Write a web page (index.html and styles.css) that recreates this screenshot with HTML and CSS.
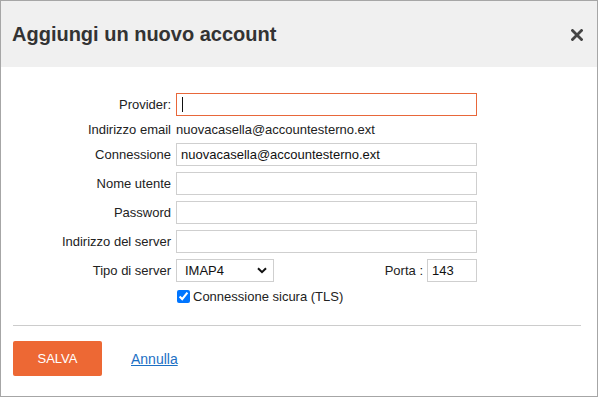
FILE: index.html
```html
<!DOCTYPE html>
<html lang="it">
<head>
    <meta charset="UTF-8">
    <meta name="viewport" content="width=device-width, initial-scale=1.0">
    <title>Aggiungi un nuovo account</title>
    <link rel="stylesheet" href="styles.css">
</head>
<body>
    <div class="dialog">
        <div class="dialog-header">
            <h1 class="dialog-title">Aggiungi un nuovo account</h1>
            <svg class="close" width="12" height="12" viewBox="0 0 12 12">
                <path d="M1.5 1.5 L10.5 10.5 M10.5 1.5 L1.5 10.5" stroke="#444" stroke-width="2.8" stroke-linecap="square"/>
            </svg>
        </div>

        <form class="account-form" action="">
            <label class="form-label" for="provider">Provider:</label>
            <div class="field field-focus">
                <span class="caret"></span>
            </div>

            <span class="form-label">Indirizzo email</span>
            <span class="form-value">nuovacasella@accountesterno.ext</span>

            <label class="form-label" for="conn">Connessione</label>
            <input class="field" type="text" id="conn" value="nuovacasella@accountesterno.ext">

            <label class="form-label" for="user">Nome utente</label>
            <input class="field" type="text" id="user">

            <label class="form-label" for="pass">Password</label>
            <input class="field" type="password" id="pass">

            <label class="form-label" for="server">Indirizzo del server</label>
            <input class="field" type="text" id="server">

            <label class="form-label" for="tipo">Tipo di server</label>
            <div class="server-row">
                <div class="select-wrap">
                    <select class="field select" id="tipo">
                        <option>IMAP4</option>
                        <option>POP3</option>
                    </select>
                    <svg class="chevron" width="10" height="7" viewBox="0 0 10 7">
                        <path d="M1 1.2 L5 5.2 L9 1.2" fill="none" stroke="#111" stroke-width="2"/>
                    </svg>
                </div>
                <label class="porta-label" for="porta">Porta :</label>
                <input class="field porta" type="text" id="porta" value="143">
            </div>

            <span></span>
            <label class="check-row">
                <input type="checkbox" class="check" checked>
                Connessione sicura (TLS)
            </label>
        </form>

        <div class="dialog-footer">
            <button class="btn-save" type="button">SALVA</button>
            <a class="cancel-link" href="#">Annulla</a>
        </div>
    </div>
</body>
</html>
```

FILE: styles.css
```css
html, body {
margin: 0;
padding: 0;
}

body {
font-family: "Liberation Sans", Arial, sans-serif;
font-size: 13px;
color: #222;
background-color: #fff;
}

/* finestra del dialogo */
.dialog {
width: 598px;
height: 397px;
box-sizing: border-box;
border: 1px solid #a6a6a6;
display: flex;
flex-direction: column;
}

.dialog-header {
height: 66px;
background-color: #f0f0f0;
display: flex;
align-items: center;
justify-content: space-between;
padding: 0 14px 0 11px;
}
.dialog-title { margin: 0; font-size: 20px; font-weight: bold; color: #333; }
.close { cursor: pointer; margin-top: 1px; }

/* griglia etichette + campi */
.account-form {
display: grid;
grid-template-columns: 159px 301px;
column-gap: 5px;
row-gap: 6px;
padding: 26px 0 0 11px;
align-items: center;
}
.form-label { text-align: right; }
.form-value { line-height: 15px; color: #222; }

.field {
height: 23px;
box-sizing: border-box;
border: 1px solid #cfcfcf;
padding: 0 4px;
font-family: inherit;
font-size: 13px;
color: #111;
background-color: #fff;
outline: none;
margin: 0;
}
.field.field-focus {
border-color: #e8673a;
display: flex;
align-items: center;
padding-left: 5px;
}
.caret { width: 1px; height: 15px; background-color: #111; }

.server-row { display: flex; align-items: center; }
.select-wrap { position: relative; }
.select {
width: 98px;
appearance: none;
-webkit-appearance: none;
padding-left: 8px;
}
.chevron { position: absolute; right: 7px; top: 8px; pointer-events: none; }
.porta-label { margin-left: auto; margin-right: 4px; }
.porta { width: 50px; }

.check-row {
display: flex;
align-items: center;
height: 19px;
margin-top: -1px;
}
.check { width: 13px; height: 13px; margin: 0 3px 0 1px; }

/* footer */
.dialog-footer {
margin: 19px 16px 0 12px;
border-top: 1px solid #cccccc;
padding-top: 15px;
display: flex;
align-items: center;
gap: 29px;
}
.btn-save {
width: 89px;
height: 35px;
border: none;
border-radius: 2px;
background-color: #ed6834;
color: #fff;
font-family: inherit;
font-size: 13px;
cursor: pointer;
}
.cancel-link { font-size: 14px; color: #1b6fc4; text-decoration: underline; }
```
